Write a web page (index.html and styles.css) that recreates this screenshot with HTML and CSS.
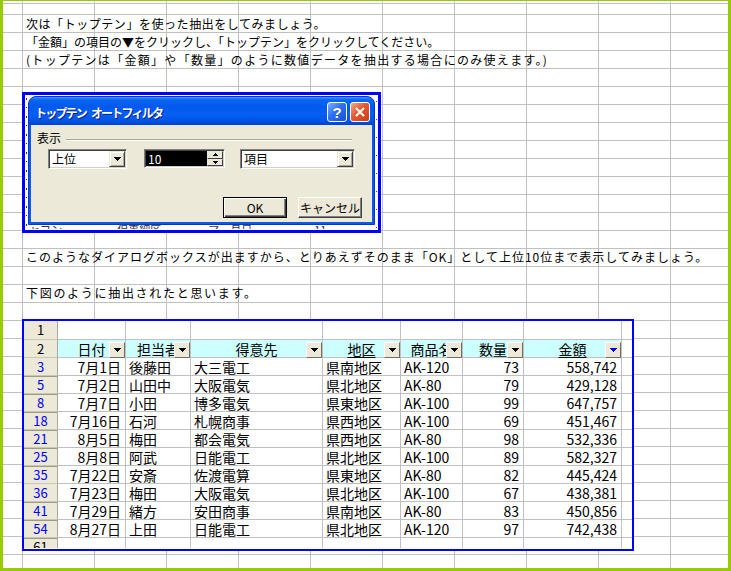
FILE: index.html
```html
<!DOCTYPE html>
<html lang="ja">
<head>
<meta charset="utf-8">
<title>トップテン オートフィルタ</title>
<link rel="stylesheet" href="styles.css">
</head>
<body>
<div class="frame">
  <div class="sheet">
    <div class="notes top">
      <p class="line l1">次は「トップテン」を使った抽出をしてみましょう。</p>
      <p class="line l2">「金額」の項目の▼をクリックし、「トップテン」をクリックしてください。</p>
      <p class="line l3">(トップテンは「金額」や「数量」のように数値データを抽出する場合にのみ使えます。)</p>
    </div>

    <div class="dlg-shot">
      <div class="window">
        <div class="titlebar">
          <span class="title">トップテン オートフィルタ</span>
          <span class="tb-btn help">?</span>
          <span class="tb-btn close"><svg width="10" height="10" viewBox="0 0 10 10"><path d="M1 1L9 9M9 1L1 9" stroke="#fff" stroke-width="2"/></svg></span>
        </div>
        <div class="client">
          <div class="group"><span class="group-label">表示</span><span class="etch"></span></div>
          <div class="controls">
            <div class="combo w1">
              <span class="field">上位</span>
              <span class="drop"><svg class="tri" width="7" height="4" viewBox="0 0 7 4"><path d="M0 0h7v1h-1v1h-1v1h-1v1h-1v-1h-1v-1h-1v-1h-1z"/></svg></span>
            </div>
            <div class="edit">
              <span class="sel">10</span>
              <span class="spin">
                <span class="sp"><svg width="5" height="3" viewBox="0 0 5 3"><path d="M2 0h1v1h1v1h1v1h-5v-1h1v-1h1z"/></svg></span>
                <span class="sp"><svg width="5" height="3" viewBox="0 0 5 3"><path d="M0 0h5v1h-1v1h-1v1h-1v-1h-1v-1h-1z"/></svg></span>
              </span>
            </div>
            <div class="combo w2">
              <span class="field">項目</span>
              <span class="drop"><svg class="tri" width="7" height="4" viewBox="0 0 7 4"><path d="M0 0h7v1h-1v1h-1v1h-1v1h-1v-1h-1v-1h-1v-1h-1z"/></svg></span>
            </div>
          </div>
          <div class="buttons">
            <span class="btn default">OK</span>
            <span class="btn">キャンセル</span>
          </div>
        </div>
      </div>
      <div class="under"><span class="u1">ャフン一</span><span class="u2">但事細区</span><span class="u3">ーマ一月日</span><span class="u4">11</span><span class="u5">#2</span></div>
    </div>

    <div class="notes mid">
      <p class="line l4">このようなダイアログボックスが出ますから、とりあえずそのまま「OK」として上位10位まで表示してみましょう。</p>
      <p class="line"></p>
      <p class="line l5">下図のように抽出されたと思います。</p>
    </div>

    <div class="tbl-shot">
      <div class="tgrid">
        <div class="rh">1</div><div></div><div></div><div></div><div></div><div></div><div></div><div></div><div class="x"></div>

        <div class="rh">2</div>
        <div class="hd">日付<span class="fb"><svg class="tri" width="7" height="4" viewBox="0 0 7 4"><path d="M0 0h7v1h-1v1h-1v1h-1v1h-1v-1h-1v-1h-1v-1h-1z"/></svg></span></div>
        <div class="hd">担当者<span class="fb"><svg class="tri" width="7" height="4" viewBox="0 0 7 4"><path d="M0 0h7v1h-1v1h-1v1h-1v1h-1v-1h-1v-1h-1v-1h-1z"/></svg></span></div>
        <div class="hd">得意先<span class="fb"><svg class="tri" width="7" height="4" viewBox="0 0 7 4"><path d="M0 0h7v1h-1v1h-1v1h-1v1h-1v-1h-1v-1h-1v-1h-1z"/></svg></span></div>
        <div class="hd"><span class="ul">地区</span><span class="fb"><svg class="tri" width="7" height="4" viewBox="0 0 7 4"><path d="M0 0h7v1h-1v1h-1v1h-1v1h-1v-1h-1v-1h-1v-1h-1z"/></svg></span></div>
        <div class="hd">商品名<span class="fb"><svg class="tri" width="7" height="4" viewBox="0 0 7 4"><path d="M0 0h7v1h-1v1h-1v1h-1v1h-1v-1h-1v-1h-1v-1h-1z"/></svg></span></div>
        <div class="hd">数量<span class="fb"><svg class="tri" width="7" height="4" viewBox="0 0 7 4"><path d="M0 0h7v1h-1v1h-1v1h-1v1h-1v-1h-1v-1h-1v-1h-1z"/></svg></span></div>
        <div class="hd"><span class="ul">金額</span><span class="fb on"><svg class="tri" width="7" height="4" viewBox="0 0 7 4"><path d="M0 0h7v1h-1v1h-1v1h-1v1h-1v-1h-1v-1h-1v-1h-1z"/></svg></span></div>
        <div class="x"></div>

        <div class="rh f">3</div><div class="r">7月1日</div><div class="l">後藤田</div><div class="l">大三電工</div><div class="l"><span class="ul">県南地区</span></div><div class="l">AK-120</div><div class="r">73</div><div class="r">558,742</div><div class="x"></div>
        <div class="rh f gap">5</div><div class="r">7月2日</div><div class="l">山田中</div><div class="l">大阪電気</div><div class="l"><span class="ul">県北地区</span></div><div class="l">AK-80</div><div class="r">79</div><div class="r">429,128</div><div class="x"></div>
        <div class="rh f gap">8</div><div class="r">7月7日</div><div class="l">小田</div><div class="l">博多電気</div><div class="l"><span class="ul">県東地区</span></div><div class="l">AK-100</div><div class="r">99</div><div class="r">647,757</div><div class="x"></div>
        <div class="rh f gap">18</div><div class="r">7月16日</div><div class="l">石河</div><div class="l">札幌商事</div><div class="l"><span class="ul">県西地区</span></div><div class="l">AK-100</div><div class="r">69</div><div class="r">451,467</div><div class="x"></div>
        <div class="rh f gap">21</div><div class="r">8月5日</div><div class="l">梅田</div><div class="l">都会電気</div><div class="l"><span class="ul">県西地区</span></div><div class="l">AK-80</div><div class="r">98</div><div class="r">532,336</div><div class="x"></div>
        <div class="rh f gap">25</div><div class="r">8月8日</div><div class="l">阿武</div><div class="l">日能電工</div><div class="l"><span class="ul">県北地区</span></div><div class="l">AK-100</div><div class="r">89</div><div class="r">582,327</div><div class="x"></div>
        <div class="rh f gap">35</div><div class="r">7月22日</div><div class="l">安斎</div><div class="l">佐渡電算</div><div class="l"><span class="ul">県東地区</span></div><div class="l">AK-80</div><div class="r">82</div><div class="r">445,424</div><div class="x"></div>
        <div class="rh f">36</div><div class="r">7月23日</div><div class="l">梅田</div><div class="l">大阪電気</div><div class="l"><span class="ul">県北地区</span></div><div class="l">AK-100</div><div class="r">67</div><div class="r">438,381</div><div class="x"></div>
        <div class="rh f gap">41</div><div class="r">7月29日</div><div class="l">緒方</div><div class="l">安田商事</div><div class="l"><span class="ul">県南地区</span></div><div class="l">AK-80</div><div class="r">83</div><div class="r">450,856</div><div class="x"></div>
        <div class="rh f gap">54</div><div class="r">8月27日</div><div class="l">上田</div><div class="l">日能電工</div><div class="l"><span class="ul">県北地区</span></div><div class="l">AK-120</div><div class="r">97</div><div class="r">742,438</div><div class="x"></div>

        <div class="rh gap last">61</div><div class="last"></div><div class="last"></div><div class="last"></div><div class="last"></div><div class="last"></div><div class="last"></div><div class="last"></div><div class="x last"></div>
      </div>
    </div>
  </div>
</div>
</body>
</html>
```

FILE: styles.css
```css
html, body {
  margin: 0;
  padding: 0;
}

body {
  width: 731px;
  height: 571px;
  overflow: hidden;
  background: #fff;
  color: #000;
  font-family: "Noto Sans CJK JP", "Noto Sans", sans-serif;
}

.frame {
  box-sizing: border-box;
  width: 731px;
  height: 571px;
  border-style: solid;
  border-color: #9c0;
  border-width: 1px 3px 3px 3px;
}

.sheet {
  display: flow-root;
  height: 100%;
  background-color: #fff;
  background-image:
    linear-gradient(to right, #c0c0c0 1px, transparent 1px),
    linear-gradient(to bottom, #c0c0c0 1px, transparent 1px),
    linear-gradient(#c0c0c0, #c0c0c0);
  background-size: 72px 100%, 100% 18px, 100% 1px;
  background-position: 19px 0, 0 13px, 0 2px;
  background-repeat: repeat-x, repeat-y, no-repeat;
}

/* ---------- sheet notes ---------- */
.notes {
  padding-left: 23px;
  font-size: 12px;
}

.notes.top { margin-top: 14px; }
.notes.mid { margin-top: 15px; }

.line {
  margin: 0;
  height: 18px;
  line-height: 18px;
  white-space: nowrap;
}

.l1 { letter-spacing: 0.55px; }
.l2 { letter-spacing: 0; }
.l3 { letter-spacing: 1.3px; }
.l4 { letter-spacing: 1px; }
.l5 { letter-spacing: 1.7px; }

/* ---------- dialog screenshot ---------- */
.dlg-shot {
  box-sizing: border-box;
  width: 359px;
  height: 141px;
  margin: 23px 0 0 19px;
  padding: 1px 3px 0;
  border: 3px solid #0000ff;
  background-color: #fff;
  background-image:
    repeating-linear-gradient(to bottom, transparent 0 3px, #333 3px 5px, transparent 5px 12px, #333 12px 13px, transparent 13px 18px),
    repeating-linear-gradient(to bottom, transparent 0 6px, #444 6px 7px, transparent 7px 18px);
  background-size: 1px 100%, 1px 100%;
  background-position: 1px 0, right 1px top 0;
  background-repeat: no-repeat;
  overflow: hidden;
}

.window {
  box-sizing: border-box;
  width: 347px;
  height: 129px;
  display: flex;
  flex-direction: column;
  padding: 0 2px 2px;
  border: 1px solid #0831d9;
  border-radius: 8px 8px 0 0;
  background: #0a5ae6;
}

.titlebar {
  height: 28px;
  margin: 0 -2px;
  padding: 2px 4px 0 6px;
  box-sizing: border-box;
  display: flex;
  align-items: center;
  border-radius: 7px 7px 0 0;
  background: linear-gradient(#3d95ff 0, #0a66f0 10%, #0058ee 35%, #0660f2 60%, #0054e6 85%, #0044cf 100%);
}

.title {
  color: #fff;
  font-size: 12px;
  font-weight: bold;
  letter-spacing: -1.8px;
  word-spacing: 4px;
  white-space: nowrap;
  text-shadow: 1px 1px 0 #0a1e8a;
}

.tb-btn {
  box-sizing: border-box;
  width: 20px;
  height: 20px;
  border: 1px solid #fff;
  border-radius: 3px;
  display: flex;
  align-items: center;
  justify-content: center;
}

.help {
  margin-left: auto;
  margin-right: 3px;
  color: #fff;
  font-family: "Liberation Sans", sans-serif;
  font-size: 15px;
  font-weight: bold;
  line-height: 1;
  background: linear-gradient(135deg, #7fb0ff 0, #2d6ff0 45%, #1a52d8 100%);
}

.close {
  background: linear-gradient(135deg, #f4a889 0, #e2582f 45%, #c8401c 100%);
}

.close svg { display: block; }

.client {
  flex: 1;
  padding: 7px 0 0 6px;
  background: #ece9d8;
  font-size: 12px;
}

.group {
  height: 12px;
  display: flex;
  align-items: center;
  line-height: 12px;
}

.etch {
  flex: 1;
  margin: 3px 20px 0 5px;
  border-top: 1px solid #aca899;
  border-bottom: 1px solid #fff;
}

.controls {
  display: flex;
  margin: 5px 0 0 11px;
}

.combo,
.edit {
  box-sizing: border-box;
  display: flex;
  padding: 1px;
  border: 1px solid;
  border-color: #808080 #fff #fff #808080;
  box-shadow: inset 1px 1px #404040, inset -1px -1px #d4d0c8;
  background: #fff;
}

.combo { height: 20px; }
.w1 { width: 79px; margin-right: 17px; }
.w2 { width: 115px; }

.edit {
  width: 81px;
  height: 19px;
  margin-right: 15px;
}

.field {
  flex: 1;
  padding-left: 2px;
  line-height: 16px;
}

.drop {
  box-sizing: border-box;
  width: 16px;
  height: 16px;
  display: flex;
  align-items: center;
  justify-content: center;
  border: 1px solid;
  border-color: #ece9d8 #404040 #404040 #ece9d8;
  box-shadow: inset 1px 1px #fff, inset -1px -1px #aca899;
  background: #ece9d8;
}

.tri { display: block; fill: #000; }

.sel {
  flex: 1;
  padding-left: 2px;
  background: #000;
  color: #fff;
  line-height: 15px;
}

.spin {
  width: 16px;
  display: flex;
  flex-direction: column;
}

.sp {
  flex: 1;
  box-sizing: border-box;
  display: flex;
  align-items: center;
  justify-content: center;
  border: 1px solid;
  border-color: #ece9d8 #404040 #404040 #ece9d8;
  background: #ece9d8;
}

.sp svg { display: block; fill: #000; }

.buttons {
  display: flex;
  gap: 11px;
  margin: 28px 0 0 186px;
}

.btn {
  box-sizing: border-box;
  width: 64px;
  height: 21px;
  display: flex;
  align-items: center;
  justify-content: center;
  border: 1px solid;
  border-color: #fff #404040 #404040 #fff;
  box-shadow: inset -1px -1px #808080;
  background: #ece9d8;
  line-height: 1;
}

.btn.default {
  border-color: #000;
  box-shadow: inset 1px 1px #fff, inset -1px -1px #404040, inset -2px -2px #808080;
}

.under {
  height: 4px;
  margin: 0 -1px;
  overflow: hidden;
  white-space: nowrap;
  font-size: 11px;
  line-height: 8px;
  color: #333;
}

.under span { display: inline-block; }
.u1 { margin-left: 2px; }
.u2 { margin-left: 44px; }
.u3 { margin-left: 36px; }
.u4 { margin-left: 62px; }
.u5 { margin-left: 50px; }

/* ---------- table screenshot ---------- */
.tbl-shot {
  box-sizing: border-box;
  width: 612px;
  height: 232px;
  margin: 17px 0 0 19px;
  border: 2px solid #0000ff;
  background: #fff;
}

.tgrid {
  display: grid;
  grid-template-columns: 34px 68px 65px 132px 78px 62px 61px 98px 10px;
  grid-template-rows: 19px repeat(11, 18px) 10px;
  font-size: 14px;
}

.tgrid > div {
  box-sizing: border-box;
  overflow: hidden;
  white-space: nowrap;
  padding-top: 1px;
  line-height: 16px;
  border-right: 1px solid #c0c0c0;
  border-bottom: 1px solid #c0c0c0;
}

.tgrid > .x { border-right: none; }
.tgrid > .last { border-bottom: none; }

.tgrid > .rh {
  text-align: center;
  background: #ece9d8;
  border-right-color: #aca899;
  border-bottom-color: #c9c6b6;
  font-size: 13px;
}

.tgrid > .rh.f { color: #0000ff; }
.tgrid > .rh.gap { box-shadow: inset 0 1px 0 #9d9a8c; }

.tgrid > .hd {
  position: relative;
  overflow: visible;
  text-align: center;
  background: #ccffff;
}

.fb {
  position: absolute;
  right: 0;
  top: 2px;
  box-sizing: border-box;
  width: 16px;
  height: 16px;
  display: flex;
  align-items: center;
  justify-content: center;
  border: 1px solid;
  border-color: #fff #716f64 #716f64 #fff;
  background: #ece9d8;
}

.fb.on .tri { fill: #0000ff; }

.tgrid > .r {
  text-align: right;
  padding-right: 4px;
}

.tgrid > .l { padding-left: 3px; }

.ul { text-decoration: underline; text-underline-offset: 2px; }
```
